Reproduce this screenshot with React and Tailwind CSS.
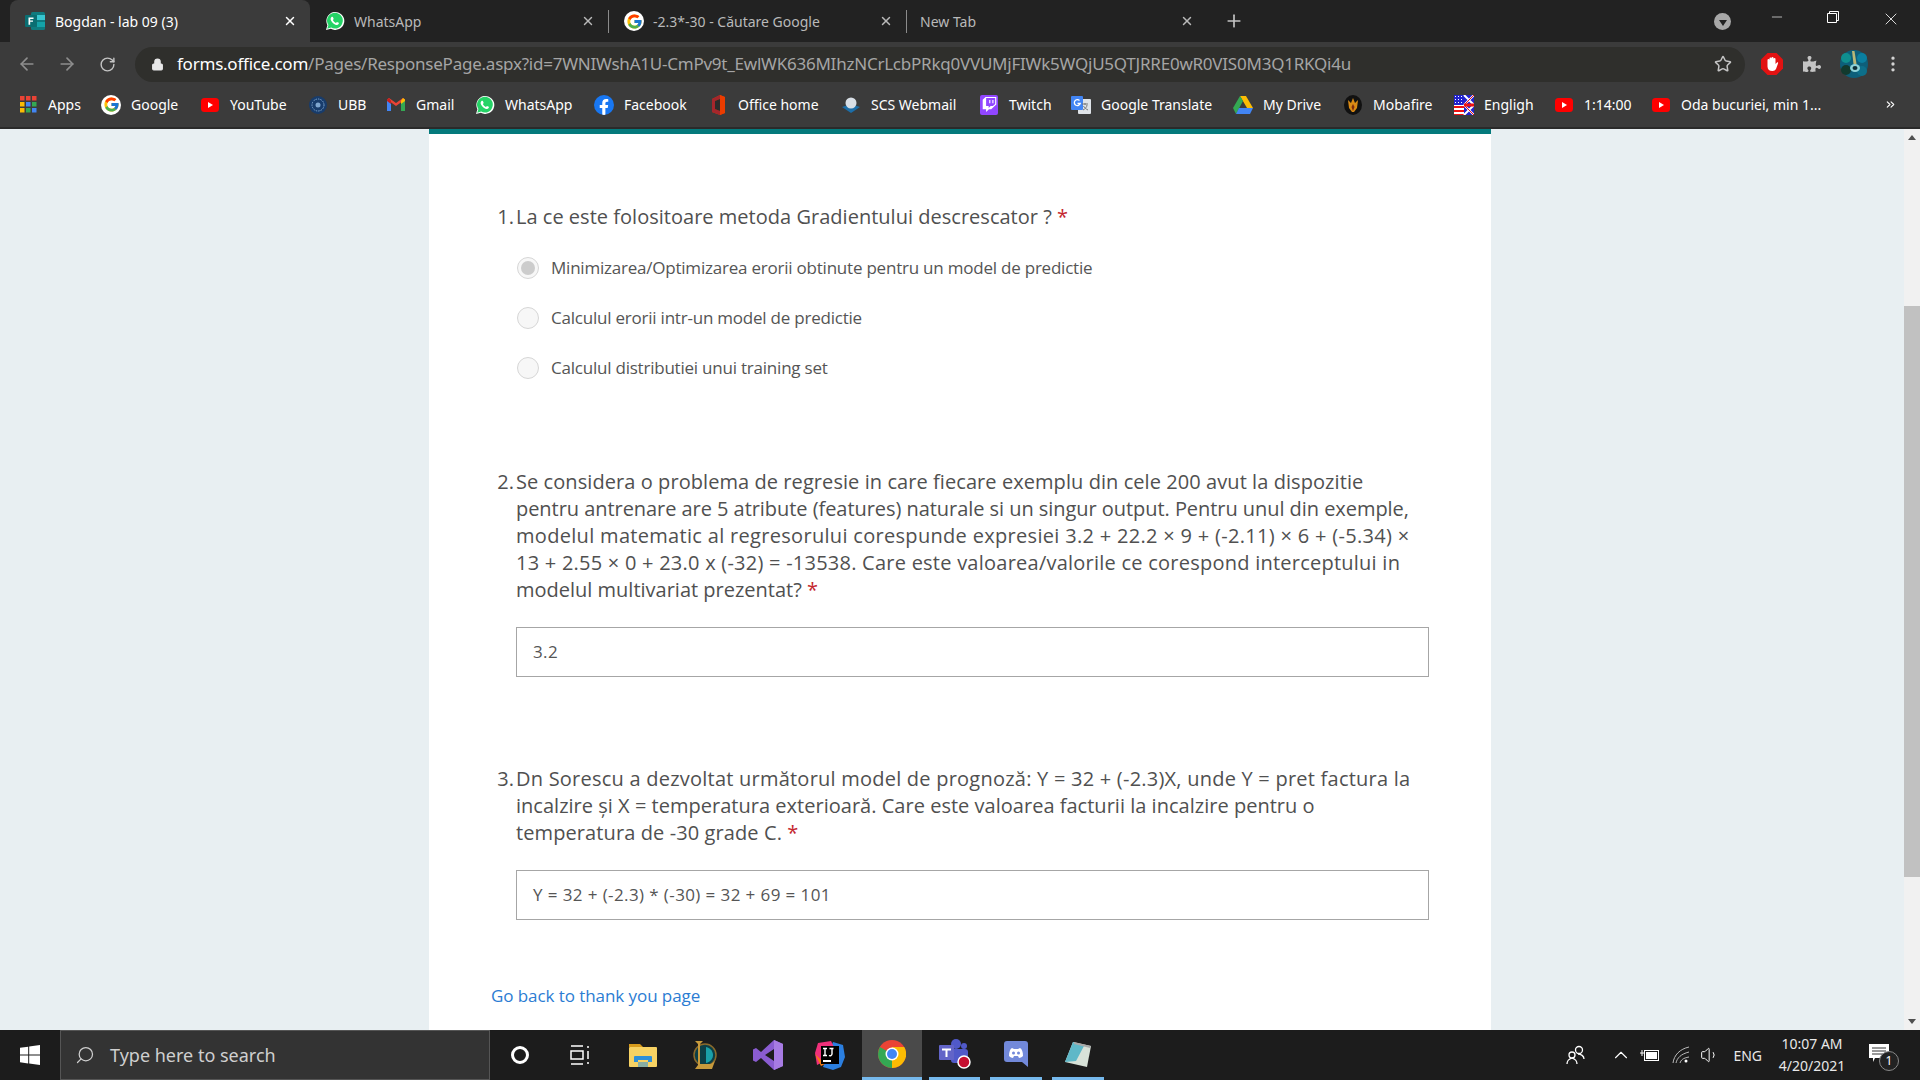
import React from "react";
import { FcGoogle } from "react-icons/fc";
import { FaTwitch, FaFacebookF, FaPuzzlePiece } from "react-icons/fa";
import { X, Plus, ArrowLeft, ArrowRight, RotateCw, Lock, Star, EllipsisVertical, Minus, ChevronsRight, ChevronUp, Search, Volume1 } from "lucide-react";

const G = () => (
  <span className="flex h-[20px] w-[20px] items-center justify-center rounded-full bg-white"><FcGoogle size={17} /></span>
);
const WA = () => (
  <svg width="20" height="20" viewBox="0 0 20 20"><path d="M1 19l1.400-4.800A9 9 0 1 1 5.800 17.700z" fill="#fff"/><path d="M2.300 17.700l1.100-3.600A7.900 7.900 0 1 1 6.200 16.600z" fill="#25d366"/><path d="M7.300 5.800c-.3 0-.7.100-1 .5-.8.9-.9 2-.3 3.300.9 1.900 2.500 3.500 4.500 4.200 1.300.5 2.500.2 3.100-.7.300-.4.300-.9.200-1.300l-1.900-.9-.9 1.100c-1.400-.5-2.500-1.600-3.100-3l.8-.9-.8-2.100z" fill="#fff"/></svg>
);
const YT = () => (
  <svg width="18" height="14" viewBox="0 0 18 14"><rect width="18" height="14" rx="3.500" fill="#f00"/><path d="M7 4l5 3-5 3z" fill="#fff"/></svg>
);
const FormsIcon = () => (
  <svg width="20" height="18" viewBox="0 0 20 18"><rect x="6" y="0" width="14" height="18" rx="1.500" fill="#0f7b7f"/><rect x="12" y="3" width="8" height="5" fill="#37c6d0"/><rect x="12" y="10" width="8" height="5" fill="#14a3a8"/><rect x="0" y="3" width="12" height="12" rx="1" fill="#0a6e72"/><path d="M3.500 5.500h5v1.400H5.200v1.500h2.800v1.300H5.200v3h-1.700z" fill="#fff"/></svg>
);
const Apps = () => (
  <svg width="17" height="17" viewBox="0 0 17 17">
    {[["#ea4335",0,0],["#ea4335",6,0],["#ea4335",12,0],["#fbbc04",0,6],["#4285f4",6,6],["#34a853",12,6],["#fbbc04",0,12],["#34a853",6,12],["#4285f4",12,12]].map(([c,x,y],i)=>(<rect key={i} x={x} y={y} width="4.500" height="4.500" fill={c}/>))}
  </svg>
);
const Ubb = () => (
  <svg width="18" height="18" viewBox="0 0 18 18"><circle cx="9" cy="9" r="9" fill="#183c6b"/><circle cx="9" cy="9" r="6" fill="none" stroke="#7fa6cf" strokeWidth="1" strokeDasharray="1.500 1"/><circle cx="9" cy="9" r="2.500" fill="#7fa6cf"/></svg>
);
const Gmail = () => (
  <svg width="18" height="14" viewBox="0 0 18 14"><path d="M0 2v11h4V5z" fill="#4285f4"/><path d="M14 5v8h4V2z" fill="#34a853"/><path d="M0 1.500 9 8l9-6.500L16 0 9 5 2 0z" fill="#ea4335"/><path d="M14 2.800V6l4-3V1.500L16 0z" fill="#fbbc04"/><path d="M0 1.500V3l4 3V2.800L2 0z" fill="#c5221f"/></svg>
);
const Fb = () => (
  <span className="flex h-[20px] w-[20px] items-end justify-center overflow-hidden rounded-full bg-[#1877f2]"><FaFacebookF size={16} color="#fff" /></span>
);
const Office = () => (
  <svg width="16" height="20" viewBox="0 0 16 20"><path d="M2 4l8-4 5 2v16l-5 2-8-3z" fill="#d83b01"/><path d="M2 4l8-4v4L5 6v8l5 2v4l-8-3z" fill="#a4262c"/><path d="M5 6l5-2v12l-5-2z" fill="#2b2b2b"/><path d="M10 0l5 2v16l-5 2z" fill="#eb3c00"/></svg>
);
const Scs = () => (
  <svg width="20" height="18" viewBox="0 0 20 18"><path d="M1 11l9-3 9 3-9 6z" fill="#1c6ea8"/><circle cx="10" cy="7" r="5.500" fill="#d8dfe6"/></svg>
);
const Tw = () => (
  <span className="flex h-[20px] w-[18px] items-center justify-center rounded-[2px] bg-[#9146ff]"><FaTwitch size={15} color="#fff" /></span>
);
const Translate = () => (
  <svg width="20" height="20" viewBox="0 0 20 20"><rect x="7" y="4" width="13" height="15" rx="1" fill="#dfe3e8"/><rect x="0" y="1" width="12" height="14" rx="1" fill="#4285f4"/><path d="M8.500 5.500a3 3 0 1 0 .7 3H6.500" fill="none" stroke="#fff" strokeWidth="1.300"/><path d="M11 9h6M14 8v2M12 15c2-1 4-3 4-5M12.500 11c1 2 2.500 3 4.500 4" stroke="#777" strokeWidth="1" fill="none"/></svg>
);
const Drive = () => (
  <svg width="20" height="18" viewBox="0 0 20 18"><path d="M7 0h6l7 12h-6z" fill="#fbbc04"/><path d="M7 0l3 5-7 13-3-6z" fill="#34a853"/><path d="M6 12h14l-3 6H3z" fill="#4285f4"/></svg>
);
const Moba = () => (
  <svg width="18" height="20" viewBox="0 0 18 20"><ellipse cx="9" cy="10" rx="9" ry="10" fill="#111"/><path d="M9 3l2 5 3-3-1 8-3 4h-2l-3-4-1-8 3 3z" fill="#d98a14"/><path d="M9 9l1.500 3-1.500 4-1.500-4z" fill="#7d2a0c"/></svg>
);
const Flag = () => (
  <svg width="20" height="20" viewBox="0 0 20 20"><rect width="20" height="20" fill="#fff"/><path d="M0 11h10v2H0zM0 15h10v2H0zM0 19h10v1H0z" fill="#e11"/><rect width="10" height="10" fill="#22c"/><path d="M1 1h1v1H1zM4 1h1v1H4zM7 1h1v1H7zM1 4h1v1H1zM4 4h1v1H4zM7 4h1v1H7zM1 7h1v1H1zM4 7h1v1H4zM7 7h1v1H7z" fill="#fff"/><rect x="10" width="10" height="20" fill="#22c"/><path d="M10 10 20 0M10 0l10 10M10 10l10 10M10 20l10-10" stroke="#fff" strokeWidth="2"/><path d="M10 10 20 0M10 10l10 10" stroke="#e11" strokeWidth="1"/><path d="M10 10h10" stroke="#e11" strokeWidth="3"/></svg>
);

const bookmarks = [
  ["Apps", <Apps />, "w-[83px]"], ["Google", <G />, "w-[99px]"], ["YouTube", <YT />, "w-[108px]"], ["UBB", <Ubb />, "w-[78px]"],
  ["Gmail", <Gmail />, "w-[89px]"], ["WhatsApp", <WA />, "w-[119px]"], ["Facebook", <Fb />, "w-[114px]"], ["Office home", <Office />, "w-[133px]"],
  ["SCS Webmail", <Scs />, "w-[138px]"], ["Twitch", <Tw />, "w-[92px]"], ["Google Translate", <Translate />, "w-[162px]"], ["My Drive", <Drive />, "w-[110px]"],
  ["Mobafire", <Moba />, "w-[111px]"], ["Engligh", <Flag />, "w-[100px]"], ["1:14:00", <YT />, "w-[97px]"], ["Oda bucuriei, min 1...", <YT />, "w-[215px]"],
];

function Tab({ icon, title, cls, active, sep }) {
  return (
    <div className={`flex h-full items-center ${cls} ${active ? "rounded-t-[8px] bg-[#3b3b3b] text-white" : "text-[#b9b9b9]"}`}>
      {icon ? <span className="ml-[14px] flex w-[22px] shrink-0 justify-center">{icon}</span> : null}
      <span className={`${icon ? (active ? "ml-[9px]" : "ml-[8px]") : "ml-[13px]"} flex-1 truncate text-[14px]`}>{title}</span>
      <X size={14} strokeWidth={2.500} className={active ? "mr-[13px] text-white" : "mr-[13px] text-[#b9b9b9]"} />
      {sep ? <span className="h-[23px] w-px bg-[#8b8b8b]" /> : null}
    </div>
  );
}

function Radio({ selected, children }) {
  return (
    <div className="flex h-[50px] items-center">
      <span className="flex h-[22px] w-[22px] items-center justify-center rounded-full border border-[#d6d6d6] bg-[#f7f7f7]">
        {selected ? <span className="h-[14px] w-[14px] rounded-full bg-[#cccccc]" /> : null}
      </span>
      <span className="ml-[12px] text-[17px] tracking-[-0.22px] text-[#555555]">{children}</span>
    </div>
  );
}

function Question({ n, lines, cls }) {
  return (
    <div className={`flex text-[20px] leading-[27px] text-[#505050] ${cls}`}>
      <span className="w-[18px] shrink-0 text-right">{n}.</span>
      <div className="ml-[2px]">
        {lines.map(([l, t], i) => (
          <div key={i} className={`whitespace-nowrap ${t}`}>
            {l}
            {i === lines.length - 1 ? <span className="text-[#c4262e]"> *</span> : null}
          </div>
        ))}
      </div>
    </div>
  );
}

function Answer({ value, cls }) {
  return (
    <div className={`ml-[20px] flex h-[50px] w-[913px] items-center border border-[#a6a6a6] pl-[16px] text-[17px] tracking-[0.4px] text-[#555555] ${cls}`}>
      {value}
    </div>
  );
}

const Win = () => (
  <svg width="20" height="20" viewBox="0 0 20 20" fill="#fff"><path d="M0 2.800 8.200 1.700v7.900H0zM9.200 1.500 20 0v9.600H9.200zM0 10.500h8.200v7.900L0 17.200zM9.200 10.500H20V20L9.200 18.500z"/></svg>
);
const TaskIcon = ({ children, cls }) => <div className={`flex h-full items-center justify-center ${cls}`}>{children}</div>;

export default function App() {
  return (
    <div className="flex h-screen w-full flex-col overflow-hidden bg-[#e8eff2] font-['Open_Sans','Noto_Sans',sans-serif]">
      <div className="flex h-[42px] shrink-0 items-end bg-[#222222] pl-[10px] font-['Noto_Sans',sans-serif]">
        <Tab active icon={<FormsIcon />} title="Bogdan - lab 09 (3)" cls="w-[300px]" />
        <Tab icon={<WA />} title="WhatsApp" sep cls="w-[299px]" />
        <Tab icon={<G />} title="-2.3*-30 - Căutare Google" sep cls="w-[298px]" />
        <Tab title="New Tab" cls="w-[300px]" />
        <Plus size={20} strokeWidth={2} className="mb-[11px] ml-[17px] text-[#c4c4c4]" />
        <div className="mb-[12px] ml-[470px] flex h-[17px] w-[17px] items-center justify-center rounded-full bg-[#a8a8a8]">
          <span className="mt-[2px] h-0 w-0 border-x-[4px] border-t-[6px] border-x-transparent border-t-[#222]" />
        </div>
        <div className="flex h-full flex-1 items-start pt-[9px] text-white">
          <Minus size={16} strokeWidth={1} className="ml-[38px]" />
          <svg width="12" height="12" viewBox="0 0 12 12" fill="none" stroke="#fff" className="ml-[42px] mt-[2px]"><path d="M.5 2.500h9v9h-9zM2.500 2.500v-2h9v9h-2"/></svg>
          <X size={20} strokeWidth={1} className="ml-[42px]" />
        </div>
      </div>

      <div className="flex h-[44px] shrink-0 items-center bg-[#3b3b3b] font-['Noto_Sans',sans-serif] text-[#8e8e8e]">
        <ArrowLeft size={20} className="ml-[17px]" />
        <ArrowRight size={20} className="ml-[20px]" />
        <RotateCw size={17} className="ml-[22px] text-[#c4c4c4]" />
        <div className="ml-[19px] flex h-[35px] w-[1610px] items-center rounded-full bg-[#2f2f2c] pl-[16px] text-[17px] tracking-[-0.23px]">
          <Lock size={13} fill="#e8e8e8" className="text-[#e8e8e8]" />
          <span className="ml-[13px] text-white">forms.office.com</span>
          <span className="text-[#a5a5a5]">/Pages/ResponsePage.aspx?id=7WNIWshA1U-CmPv9t_EwlWK636MIhzNCrLcbPRkq0VVUMjFIWk5WQjU5QTJRRE0wR0VIS0M3Q1RKQi4u</span>
          <Star size={18} className="ml-auto mr-[13px] text-[#c4c4c4]" />
        </div>
        <svg width="22" height="22" viewBox="0 0 22 22" className="ml-[16px]">
          <path d="M6.500 0h9L22 6.500v9L15.500 22h-9L0 15.500v-9z" fill="#e21212"/>
          <path d="M6.500 9V7a1 1 0 0 1 2 0V5.500a1 1 0 0 1 2 0V5a1 1 0 0 1 2 0v1a1 1 0 0 1 2 0v5l1.500-1.500c.8-.6 1.500.2 1 1L15 16c-.8 1.300-1.800 2-3.500 2-3 0-5-1.500-5-4.500z" fill="#fff"/>
        </svg>
        <FaPuzzlePiece size={18} className="ml-[20px] text-[#c4c4c4]" />
        <svg width="28" height="28" viewBox="0 0 28 28" className="ml-[19px]">
          <circle cx="14" cy="14" r="14" fill="#0d5f7a"/>
          <circle cx="6" cy="8" r="5" fill="#0f8f8f"/><circle cx="22" cy="8" r="5" fill="#0a7fa0"/><circle cx="6" cy="20" r="5" fill="#123a2e"/><circle cx="22" cy="21" r="5" fill="#0d6f8a"/>
          <path d="M12 1l2.500 0 2 13h-3z" fill="#b8b878"/>
          <ellipse cx="15" cy="18" rx="5" ry="4" fill="#8fd3d8"/><ellipse cx="15" cy="18" rx="2.500" ry="2" fill="#103038"/>
        </svg>
        <EllipsisVertical size={20} className="ml-[15px] text-[#d4d4d4]" />
      </div>

      <div className="flex h-[41px] shrink-0 items-center bg-[#3b3b3b] pb-[4px] pl-[18px] font-['Noto_Sans',sans-serif] text-[14px] text-white">
        {bookmarks.map(([t, ic, w]) => (
          <div key={t} className={`flex items-center ${w}`}>
            <span className="flex w-[20px] justify-center">{ic}</span>
            <span className="ml-[10px] whitespace-nowrap">{t}</span>
          </div>
        ))}
        <ChevronsRight size={13} className="ml-[18px]" />
      </div>
      <div className="h-[2px] shrink-0 bg-[#2a2a2a]" />

      <div className="flex min-h-0 flex-1">
        <div className="flex flex-1 pl-[429px]">
          <div className="w-[1062px] border-t-[5px] border-[#047a7c] bg-white pl-[67px]">
            <Question n={1} cls="mt-[69px]" lines={[["La ce este folositoare metoda Gradientului descrescator ?", "tracking-[0.02px]"]]} />
            <div className="ml-[21px] mt-[13px]">
              <Radio selected>Minimizarea/Optimizarea erorii obtinute pentru un model de predictie</Radio>
              <Radio>Calculul erorii intr-un model de predictie</Radio>
              <Radio>Calculul distributiei unui training set</Radio>
            </div>
            <Question n={2} cls="mt-[75px]" lines={[
              ["Se considera o problema de regresie in care fiecare exemplu din cele 200 avut la dispozitie", "tracking-[0.07px]"],
              ["pentru antrenare are 5 atribute (features) naturale si un singur output. Pentru unul din exemple,", "tracking-[-0.05px]"],
              ["modelul matematic al regresorului corespunde expresiei 3.2 + 22.2 × 9 + (-2.11) × 6 + (-5.34) ×", "tracking-[0.31px]"],
              ["13 + 2.55 × 0 + 23.0 x (-32) = -13538. Care este valoarea/valorile ce corespond interceptului in", "tracking-[0.24px]"],
              ["modelul multivariat prezentat?", "tracking-[0px]"],
            ]} />
            <Answer value="3.2" cls="mt-[24px]" />
            <Question n={3} cls="mt-[88px]" lines={[
              ["Dn Sorescu a dezvoltat următorul model de prognoză: Y = 32 + (-2.3)X, unde Y = pret factura la", "tracking-[0.23px]"],
              ["incalzire și X = temperatura exterioară. Care este valoarea facturii la incalzire pentru o", "tracking-[0.02px]"],
              ["temperatura de -30 grade C.", "tracking-[0.1px]"],
            ]} />
            <Answer value="Y = 32 + (-2.3) * (-30) = 32 + 69 = 101" cls="mt-[24px]" />
            <div className="ml-[-5px] mt-[63px] text-[17px] tracking-[-0.07px] text-[#2b7cd3]">Go back to thank you page</div>
          </div>
        </div>
        <div className="flex w-[16px] flex-col items-center bg-[#f1f1f1]">
          <span className="mt-[6px] h-0 w-0 border-x-[4px] border-b-[5px] border-x-transparent border-b-[#505050]" />
          <div className="mt-[166px] h-[571px] w-full bg-[#c1c1c1]" />
          <span className="mt-auto mb-[6px] h-0 w-0 border-x-[4px] border-t-[5px] border-x-transparent border-t-[#505050]" />
        </div>
      </div>

      <div className="flex h-[50px] shrink-0 items-stretch bg-[#1c1c1c] font-['Noto_Sans',sans-serif] text-white">
        <TaskIcon cls="w-[60px]"><Win /></TaskIcon>
        <div className="flex w-[430px] items-center border border-[#555] bg-[#333333] pl-[14px] text-[18px] text-[#cfcfcf]">
          <Search size={20} strokeWidth={1.500} className="-scale-x-100" />
          <span className="ml-[15px]">Type here to search</span>
        </div>
        <TaskIcon cls="ml-[16px] w-[28px]"><span className="h-[18px] w-[18px] rounded-full border-[3px] border-white" /></TaskIcon>
        <TaskIcon cls="ml-[35px] w-[24px]">
          <svg width="22" height="20" viewBox="0 0 22 20" fill="none" stroke="#fff" strokeWidth="1.500"><path d="M1 1h12M1 19h12M1 6h12v8H1zM18 1v2M18 6v8M18 17v2"/></svg>
        </TaskIcon>
        <TaskIcon cls="ml-[34px] w-[32px]">
          <svg width="28" height="24" viewBox="0 0 28 24"><path d="M0 1h11l3 3H0z" fill="#d79b1c"/><rect y="4" width="28" height="20" rx="1" fill="#f7d263"/><path d="M5 14a1 1 0 0 1 1-1h16a1 1 0 0 1 1 1v5h-4v-2H9v2H5z" fill="#2e8fd8"/><rect x="9" y="19" width="10" height="5" fill="#2e8fd8" opacity=".55"/></svg>
        </TaskIcon>
        <TaskIcon cls="ml-[29px] w-[32px]">
          <svg width="26" height="30" viewBox="0 0 26 30"><circle cx="14" cy="15" r="11" fill="#0c3f46" stroke="#8a6a2c" strokeWidth="1.500"/><path d="M15 7c5 1 7 5 7 8s-2 7-7 8z" fill="#1aa0a8"/><path d="M4 1h8L9 4v20h11l4-3-3 8H4l3-4V4z" fill="#c79a3c"/></svg>
        </TaskIcon>
        <TaskIcon cls="ml-[32px] w-[32px]">
          <svg width="30" height="30" viewBox="0 0 30 30"><path d="M21 0l9 4v22l-9 4V9l-9 6 9 6v9L8 18 3 22l-3-1.500V9.500L3 8l5 4z" fill="#8a5cd1"/><path d="M21 0l9 4v22l-9 4z" fill="#a77be3"/></svg>
        </TaskIcon>
        <TaskIcon cls="ml-[30px] w-[32px]">
          <svg width="30" height="30" viewBox="0 0 30 30"><path d="M18 2l10 3 2 12-4 10-8 3-10-3z" fill="#2b7fe0"/><path d="M3 3l13-2 3 6-13 16-4 2-2-12z" fill="#f0307a"/><path d="M0 14l6 12 4-2z" fill="#f97a12"/><rect x="6" y="6" width="18" height="18" fill="#000"/><rect x="8" y="20" width="8" height="2" fill="#fff"/><path d="M8 8.500h4M10 8.500v7M8 15.500h4M14.500 8.500h4M17 8.500v5.500a2 2 0 0 1-3 1.500" stroke="#fff" strokeWidth="1.400" fill="none"/></svg>
        </TaskIcon>
        <div className="ml-[16px] flex h-full w-[60px] items-center justify-center border-b-[3px] border-[#76b9ed] bg-[#4a4a4a]">
          <svg width="28" height="28" viewBox="0 0 28 28"><circle cx="14" cy="14" r="14" fill="#ea4335"/><path d="M14 14 1.900 7A14 14 0 0 0 14 28z" fill="#34a853"/><path d="M14 7h12.200A14 14 0 0 1 14 28l0-14z" fill="#fbbc04"/><circle cx="14" cy="14" r="6.500" fill="#fff"/><circle cx="14" cy="14" r="5" fill="#4285f4"/></svg>
        </div>
        <div className="ml-[7px] flex h-full w-[51px] items-center justify-center border-b-[3px] border-[#76b9ed]">
          <svg width="32" height="30" viewBox="0 0 32 30"><circle cx="17" cy="5" r="5" fill="#5059c9"/><circle cx="25" cy="7" r="3" fill="#5059c9"/><rect x="12" y="10" width="17" height="14" rx="3" fill="#5059c9"/><rect x="0" y="6" width="15" height="15" rx="1" fill="#6264c8"/><path d="M3 9.500h9v2H8.500V18h-2v-6.500H3z" fill="#fff"/><circle cx="25" cy="23" r="6" fill="#c50f30" stroke="#fff" strokeWidth="1.500"/></svg>
        </div>
        <div className="ml-[10px] flex h-full w-[52px] items-center justify-center border-b-[3px] border-[#76b9ed]">
          <svg width="24" height="26" viewBox="0 0 24 26"><path d="M3 0h18a3 3 0 0 1 3 3v23l-6-5H3a3 3 0 0 1-3-3V3a3 3 0 0 1 3-3z" fill="#7289da"/><path d="M5 15c0-4 1-7 3-8l2 1h4l2-1c2 1 3 4 3 8-1 1-3 2-4 2l-1-2h-4l-1 2c-1 0-3-1-4-2z" fill="#fff"/><circle cx="9.500" cy="12" r="1.500" fill="#7289da"/><circle cx="14.500" cy="12" r="1.500" fill="#7289da"/></svg>
        </div>
        <div className="ml-[10px] flex h-full w-[52px] items-center justify-center border-b-[3px] border-[#76b9ed]">
          <svg width="28" height="26" viewBox="0 0 28 26"><path d="M9 1l18 4-4 21L1 21z" fill="#d8e2d8"/><path d="M9 1 1 21l11-1 8-15z" fill="#5fb8c8"/><path d="M10 1l17 4-1 2-16-4z" fill="#a8a8a8"/></svg>
        </div>

        <div className="ml-auto flex items-center">
          <svg width="20" height="20" viewBox="0 0 20 20" fill="none" stroke="#fff" strokeWidth="1.300"><circle cx="13" cy="5" r="3.500"/><circle cx="6" cy="10" r="3"/><path d="M1 19c0-4 2-5 5-6 3 1 5 2 5 6M12 9c3 0 6 2 6 5"/></svg>
          <ChevronUp size={22} strokeWidth={1.200} className="ml-[24px]" />
          <svg width="20" height="13" viewBox="0 0 20 13" className="ml-[8px]" fill="none" stroke="#fff"><rect x="4.500" y="1.500" width="14" height="10"/><rect x="6" y="3" width="11" height="7" fill="#fff" stroke="none"/><path d="M0 4h4M2 1v6"/></svg>
          <svg width="18" height="18" viewBox="0 0 18 18" fill="none" stroke="#bbb" strokeWidth="1" className="ml-[12px]"><path d="M1 17C2 9 8 3 17 1M4 17c1-5 5-9 13-11M8 17c1-3 3-5 9-6"/><circle cx="14" cy="15" r="1.500" fill="#fff" stroke="none"/></svg>
          <Volume1 size={20} strokeWidth={1.200} className="ml-[10px]" />
          <span className="ml-[13px] text-[14px] text-[#e8e8e8]">ENG</span>
          <div className="ml-[15px] flex w-[70px] flex-col items-center text-[14px] leading-[22px] text-[#e8e8e8]">
            <span className="whitespace-nowrap">10:07 AM</span>
            <span className="whitespace-nowrap">4/20/2021</span>
          </div>
          <div className="relative ml-[22px] mr-[30px] flex h-[22px] w-[21px] items-start">
            <svg width="20" height="18" viewBox="0 0 20 18" fill="#fff"><path d="M0 0h20v14H6l-2 4v-4H0z"/><path d="M3 4h14M3 7h14M3 10h14" stroke="#333" strokeWidth="1"/></svg>
            <span className="absolute -right-[9px] top-[7px] flex h-[20px] w-[20px] items-center justify-center rounded-full border border-[#888] bg-[#222] text-[12px]">1</span>
          </div>
        </div>
      </div>
    </div>
  );
}
